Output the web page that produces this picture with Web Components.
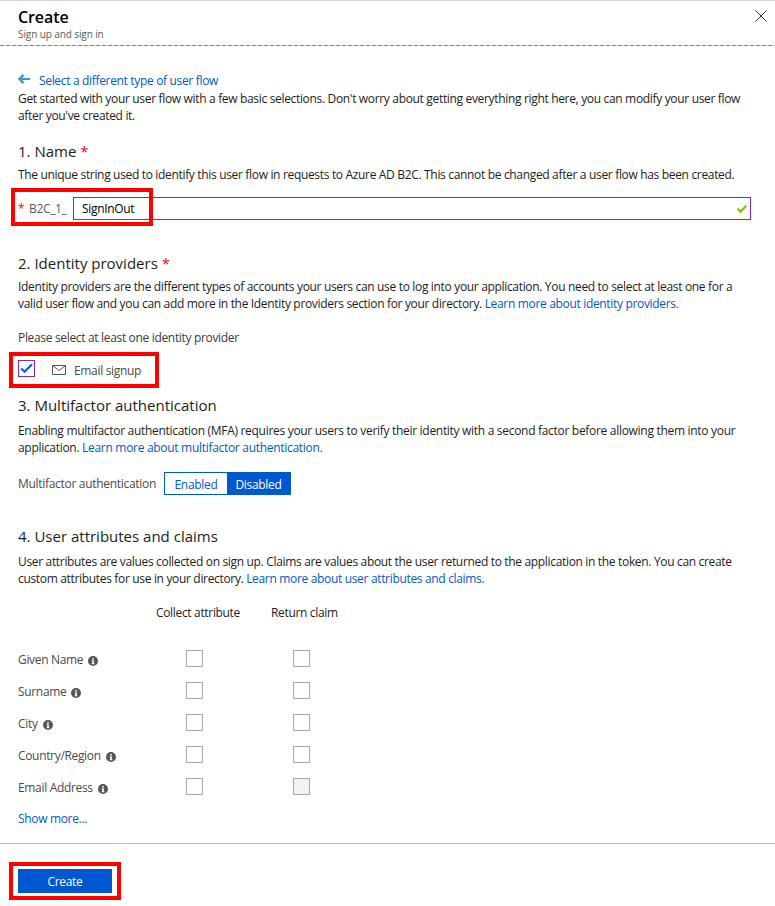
<!DOCTYPE html>
<html>
<head>
<meta charset="utf-8">
<title>Create</title>
<style>
  html, body { margin: 0; padding: 0; background: #fff; }
  body {
    width: 775px;
    height: 906px;
    overflow: hidden;
    font: 12px/17px "Open Sans", "Liberation Sans", sans-serif;
    letter-spacing: -0.33px;
    color: #1d1d1d;
  }
  a { color: #0058d1; text-decoration: none; }
</style>
</head>
<body>
<create-blade>
  <blade-header slot="header" title="Create" subtitle="Sign up and sign in"></blade-header>

  <back-link href="#">Select a different type of user flow</back-link>
  <p style="margin:1px 0 0">Get started with your user flow with a few basic selections. Don't worry about getting everything right here, you can modify your user flow<br>after you've created it.</p>

  <form-section heading="1. Name" required style="margin-top:17px">
    <p style="margin:0">The unique string used to identify this user flow in requests to Azure AD B2C. This cannot be changed after a user flow has been created.</p>
    <name-field prefix="B2C_1_" value="SignInOut"></name-field>
  </form-section>

  <form-section heading="2. Identity providers" required style="margin-top:33px">
    <p style="margin:0">Identity providers are the different types of accounts your users can use to log into your application. You need to select at least one for a<br>valid user flow and you can add more in the Identity providers section for your directory. <a href="#">Learn more about identity providers.</a></p>
    <p style="margin:17px 0 0;color:#3a3a3a">Please select at least one identity provider</p>
    <provider-option label="Email signup"></provider-option>
  </form-section>

  <form-section heading="3. Multifactor authentication" style="margin-top:18px;--head-gap:7px">
    <p style="margin:0;letter-spacing:-0.3px">Enabling multifactor authentication (MFA) requires your users to verify their identity with a second factor before allowing them into your<br>application. <a href="#">Learn more about multifactor authentication.</a></p>
    <mfa-toggle label="Multifactor authentication"></mfa-toggle>
  </form-section>

  <form-section heading="4. User attributes and claims" style="margin-top:31px;--head-gap:7px">
    <p style="margin:0">User attributes are values collected on sign up. Claims are values about the user returned to the application in the token. You can create<br>custom attributes for use in your directory. <a href="#">Learn more about user attributes and claims.</a></p>
    <attr-table>
      <attr-row label="Given Name"></attr-row>
      <attr-row label="Surname"></attr-row>
      <attr-row label="City"></attr-row>
      <attr-row label="Country/Region"></attr-row>
      <attr-row label="Email Address" locked></attr-row>
    </attr-table>
    <p style="margin:17px 0 0"><a href="#">Show more...</a></p>
  </form-section>

  <blade-footer slot="footer">Create</blade-footer>
</create-blade>

<script>
class CreateBlade extends HTMLElement {
  constructor() {
    super();
    this.attachShadow({mode: 'open'}).innerHTML = `
      <style>
        :host { display: flex; flex-direction: column; height: 906px; }
        .content { flex: 1; padding: 26px 18px 0; }
      </style>
      <slot name="header"></slot>
      <div class="content"><slot></slot></div>
      <slot name="footer"></slot>
    `;
  }
}
customElements.define('create-blade', CreateBlade);

class BladeHeader extends HTMLElement {
  constructor() {
    super();
    this.attachShadow({mode: 'open'}).innerHTML = `
      <style>
        :host {
          display: flex;
          justify-content: space-between;
          height: 46px;
          box-sizing: border-box;
          padding: 6px 8px 0 18px;
          border-top: 1px solid #d6d6d6;
          background:
            repeating-linear-gradient(90deg, #1fa8dc 0 4px, #cfcfcf 4px 6px) 0 100% / 100% 1px no-repeat;
        }
        h1 { margin: 0; font-size: 16px; line-height: 20px; font-weight: 600; color: #000; letter-spacing: -0.1px; }
        .sub { font-size: 10px; line-height: 14px; color: #5a5a5a; letter-spacing: -0.1px; }
        svg { display: block; margin-top: 3px; }
      </style>
      <div>
        <h1>${this.getAttribute('title')}</h1>
        <div class="sub">${this.getAttribute('subtitle')}</div>
      </div>
      <svg width="12" height="12" viewBox="0 0 12 12" fill="none" stroke="#2b3038" stroke-width="1"><path d="M0.5 0.5 11.5 11.5M11.5 0.5 0.5 11.5"/></svg>
    `;
  }
}
customElements.define('blade-header', BladeHeader);

class BackLink extends HTMLElement {
  constructor() {
    super();
    this.attachShadow({mode: 'open'}).innerHTML = `
      <style>
        :host { display: flex; align-items: center; gap: 9px; height: 17px; }
        a { color: #0058d1; text-decoration: none; }
        svg { display: block; margin-top: -3px; }
      </style>
      <svg width="12" height="10" viewBox="0 0 12 10" fill="none" stroke="#3a9cc6" stroke-width="2"><path d="M12 5H2" /><path d="M5.5 .8 1.4 5l4.1 4.2" stroke-width="2.4"/></svg>
      <a href="${this.getAttribute('href')}"><slot></slot></a>
    `;
  }
}
customElements.define('back-link', BackLink);

class FormSection extends HTMLElement {
  constructor() {
    super();
    const star = this.hasAttribute('required') ? ' <span>*</span>' : '';
    this.attachShadow({mode: 'open'}).innerHTML = `
      <style>
        :host { display: block; }
        h2 { margin: 0 0 var(--head-gap, 5px); font-size: 15px; line-height: 20px; font-weight: 400; color: #1d1d1d; letter-spacing: 0; }
        span { color: #e00b1c; }
      </style>
      <h2>${this.getAttribute('heading')}${star}</h2>
      <slot></slot>
    `;
  }
}
customElements.define('form-section', FormSection);

class NameField extends HTMLElement {
  constructor() {
    super();
    this.attachShadow({mode: 'open'}).innerHTML = `
      <style>
        :host { display: flex; align-items: center; position: relative; height: 23px; margin: 14px 6px 0 0; }
        .star { color: #e00b1c; width: 11px; }
        .prefix { color: #5a5a5a; width: 44px; }
        .box {
          flex: 1;
          display: flex;
          align-items: center;
          justify-content: space-between;
          height: 23px;
          box-sizing: border-box;
          padding: 0 3px 0 8px;
          border: 1px solid #8e24aa;
          color: #000;
        }
        svg { display: block; }
        .mark {
          position: absolute;
          left: -7px;
          top: -9px;
          width: 142px;
          height: 38px;
          box-sizing: border-box;
          border: 4px solid #f00;
        }
      </style>
      <span class="star">*</span>
      <span class="prefix">${this.getAttribute('prefix')}</span>
      <div class="box">
        <span>${this.getAttribute('value')}</span>
        <svg width="10" height="8" viewBox="0 0 10 8" fill="none" stroke="#7fba00" stroke-width="2"><path d="M.7 3.8 3.6 6.6 9.3.7"/></svg>
      </div>
      <div class="mark"></div>
    `;
  }
}
customElements.define('name-field', NameField);

class CheckBox extends HTMLElement {
  constructor() {
    super();
    const tick = this.hasAttribute('checked')
      ? '<svg width="15" height="15" viewBox="0 0 15 15" fill="none" stroke="#0a5fd6" stroke-width="2.2"><path d="M2.2 7.5 5.6 10.8 13 3.2"/></svg>'
      : '';
    this.attachShadow({mode: 'open'}).innerHTML = `
      <style>
        :host {
          display: block;
          width: 17px;
          height: 17px;
          box-sizing: border-box;
          border: 1px solid var(--box-border, #a6a6a6);
          background: var(--box-bg, #fff);
        }
        svg { display: block; }
      </style>
      ${tick}
    `;
  }
}
customElements.define('check-box', CheckBox);

class ProviderOption extends HTMLElement {
  constructor() {
    super();
    this.attachShadow({mode: 'open'}).innerHTML = `
      <style>
        :host { display: flex; align-items: center; position: relative; height: 17px; margin-top: 14px; color: #4a4a4a; }
        check-box { --box-border: #8e24aa; margin-right: 17px; }
        svg { display: block; margin: 2px 8px 0 0; }
        span { padding-top: 3px; }
        .mark {
          position: absolute;
          left: -9px;
          top: -8px;
          width: 150px;
          height: 36px;
          box-sizing: border-box;
          border: 4px solid #f00;
        }
      </style>
      <check-box checked></check-box>
      <svg width="14" height="10" viewBox="0 0 14 10" fill="none" stroke="#555"><path d="M.5.5h13v9H.5zM.5.5l6.5 5 6.5-5"/></svg>
      <span>${this.getAttribute('label')}</span>
      <div class="mark"></div>
    `;
  }
}
customElements.define('provider-option', ProviderOption);

class MfaToggle extends HTMLElement {
  constructor() {
    super();
    this.attachShadow({mode: 'open'}).innerHTML = `
      <style>
        :host { display: flex; align-items: center; margin-top: 16px; height: 23px; color: #4a4a4a; letter-spacing: -0.3px; }
        .label { width: 146px; }
        .group { display: flex; height: 23px; box-sizing: border-box; border: 1px solid #0058d1; }
        .group div { display: flex; align-items: center; justify-content: center; padding-top: 1px; box-sizing: border-box; }
        .on { width: 62px; color: #0058d1; }
        .off { width: 63px; background: #0058d1; color: #fff; }
      </style>
      <span class="label">${this.getAttribute('label')}</span>
      <div class="group"><div class="on">Enabled</div><div class="off">Disabled</div></div>
    `;
  }
}
customElements.define('mfa-toggle', MfaToggle);

class AttrTable extends HTMLElement {
  constructor() {
    super();
    this.attachShadow({mode: 'open'}).innerHTML = `
      <style>
        :host { display: block; margin-top: 17px; }
        .head { display: grid; grid-template-columns: 138px 115px auto; height: 17px; margin-bottom: 27px; color: #1d1d1d; }
        .rows { display: grid; row-gap: 15px; }
      </style>
      <div class="head"><span></span><span>Collect attribute</span><span>Return claim</span></div>
      <div class="rows"><slot></slot></div>
    `;
  }
}
customElements.define('attr-table', AttrTable);

class AttrRow extends HTMLElement {
  constructor() {
    super();
    const locked = this.hasAttribute('locked') ? 'class="locked"' : '';
    this.attachShadow({mode: 'open'}).innerHTML = `
      <style>
        :host { display: grid; grid-template-columns: 168px 107px 17px; height: 17px; align-items: center; color: #4a4a4a; }
        .label { display: flex; align-items: center; gap: 5px; padding-top: 3px; }
        svg { display: block; margin-top: 2px; }
        .locked { --box-bg: #f2f2f2; }
      </style>
      <div class="label">
        <span>${this.getAttribute('label')}</span>
        <svg width="10" height="10" viewBox="0 0 10 10"><circle cx="5" cy="5" r="5" fill="#555"/><path d="M4.2 2h1.6v1.4H4.2zM3.7 4.2h2.1v3.1h.6v.9H3.7v-.9h.5V5.1h-.5z" fill="#fff"/></svg>
      </div>
      <check-box></check-box>
      <check-box ${locked}></check-box>
    `;
  }
}
customElements.define('attr-row', AttrRow);

class BladeFooter extends HTMLElement {
  constructor() {
    super();
    this.attachShadow({mode: 'open'}).innerHTML = `
      <style>
        :host { display: block; height: 63px; box-sizing: border-box; padding: 25px 18px 0; border-top: 1px solid #bdbdbd; }
        .btn { position: relative; display: flex; align-items: center; justify-content: center; width: 94px; height: 24px; background: #0058d1; color: #fff; }
        .mark {
          position: absolute;
          left: -9px;
          top: -7px;
          width: 112px;
          height: 38px;
          box-sizing: border-box;
          border: 4px solid #f00;
        }
      </style>
      <div class="btn"><slot></slot><div class="mark"></div></div>
    `;
  }
}
customElements.define('blade-footer', BladeFooter);
</script>
</body>
</html>
